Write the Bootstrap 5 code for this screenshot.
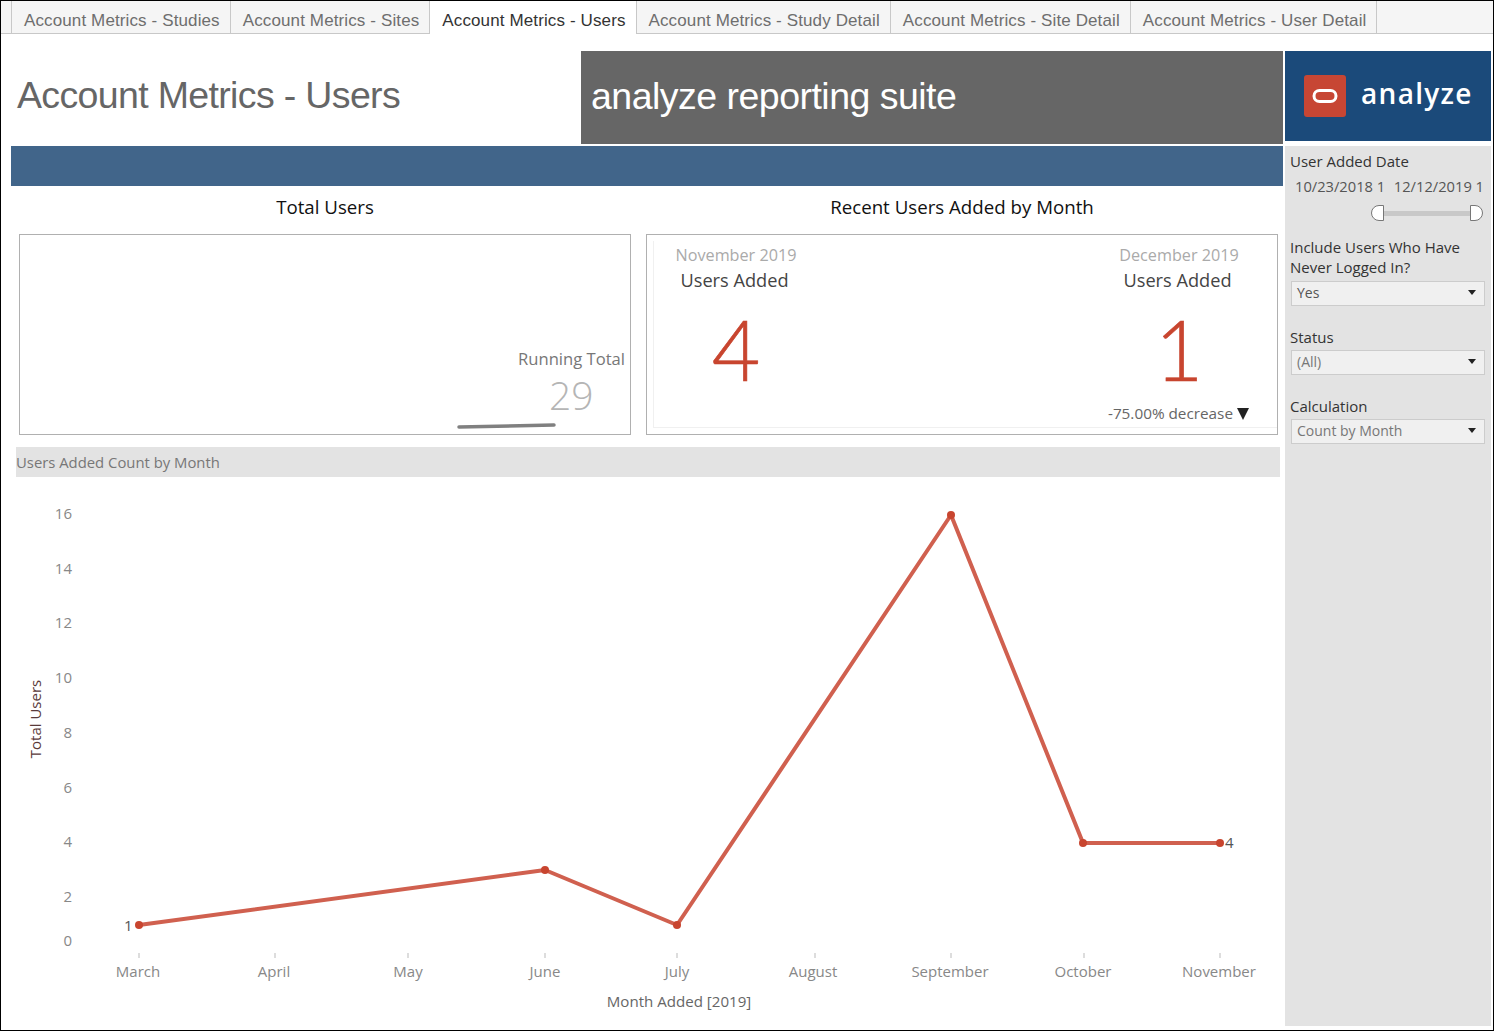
<!DOCTYPE html>
<html lang="en"><head><meta charset="utf-8"><title>Account Metrics - Users</title>
<link href="https://cdn.jsdelivr.net/npm/bootstrap@5.3.0/dist/css/bootstrap.min.css" rel="stylesheet">
<style>
html,body{margin:0;background:#fff}
body{font-family:"Open Sans","Noto Sans",sans-serif;color:#333}
.frame{width:1494px;height:1031px;border:1px solid #000;overflow:hidden;background:#fff}
.tabstrip{height:33px;background:#f5f5f5;border-bottom:1px solid #c8c8c8;padding-left:10px;flex-wrap:nowrap;margin-bottom:0;--bs-nav-tabs-border-width:0}
.tabstrip .nav-link{height:32px;padding:9px 10px 0 12px;border:0;border-right:1px solid #c8c8c8;border-radius:0;color:#6e6e6e;font:17px/21px "Liberation Sans",sans-serif;letter-spacing:.12px;background:transparent;margin:0;white-space:nowrap}
.tabstrip .nav-link.active{height:33px;background:#fff;color:#333;border-right:1px solid #c8c8c8}
.tabstrip .first-tab{border-left:1px solid #c8c8c8}
.mainarea{padding-top:17px;height:996px}
.leftcol{width:1282px;flex:none}
.headrow{height:93px}
.ptitle{width:580px;font:37.5px/1 "Liberation Sans",sans-serif;letter-spacing:-.65px;color:#666;padding:26px 0 0 16px;flex:none}
.suite{flex:1;background:#666;color:#fff;font:37.5px/1 "Liberation Sans",sans-serif;letter-spacing:-.52px;padding:27px 0 0 10px}
.band{height:40px;background:#41658a;margin:2px 0 0 10px}
.stitle{font-size:18.7px;line-height:24px;color:#111;text-align:center}
.titles{padding:9px 0 0 18px;height:48px}
.t1{width:612px}.t2{width:632px;margin-left:15px;flex:none}
.cardrow{padding-left:18px}
.kpibox{border:1px solid #b0b0b0;height:201px;background:#fff;border-radius:0;flex:none}
.kpi1{width:612px}
.kpi2{width:632px;margin-left:15px;padding:6px 0 6px 6px}
.kinner{height:100%;border-left:1px solid #f0f0f0;border-bottom:1px solid #f0f0f0;position:relative}
.rt{text-align:right;padding-right:5px;margin-top:113px;color:#777;font-size:16.6px;line-height:22px}
.rtnum{font-size:39px;line-height:46px;color:#b5b5b5;font-weight:300;padding-left:529px;margin-top:2px;width:600px}
.spark{display:block;margin:4px 0 0 437px}
.kcol{text-align:center}
.kleft{margin-left:20px;width:124px}
.kright{margin-right:36px;width:124px}
.kdate{color:#aaa;font-size:16.2px;line-height:20px;margin-top:4px}
.kname{color:#444;font-size:18.2px;line-height:24px;margin:3px 0 0 -3px}
.knum{color:#c8452f;font-family:Lato,"Open Sans",sans-serif;font-size:84px;line-height:90px;font-weight:300;margin-top:12px;-webkit-text-stroke:.6px #c8452f}
.kdelta{position:absolute;right:28px;bottom:4px;font-size:15.3px;line-height:20px;color:#666;white-space:nowrap}
.kdelta .tri{display:inline-block;width:0;height:0;border-left:6px solid transparent;border-right:6px solid transparent;border-top:12px solid #222;margin-left:4px;vertical-align:-1px}
.strip{margin:12px 3px 0 15px;height:30px;background:#e3e3e3;color:#777;font-size:14.85px;line-height:30px}
.chartsvg{display:block;margin-top:0}
.chartsvg text{font-family:"Open Sans","Noto Sans",sans-serif}
.side{width:206px;flex:none;margin-left:2px}
.logo{height:90px;background:#1b4a7a;padding-left:19px;gap:15px}
.lmark{width:42px;height:42px;background:#c74634;border-radius:3px}
.lname{color:#fff;font-size:28px;font-weight:600;letter-spacing:1.3px;line-height:1;padding-bottom:6px}
.sfilters{margin-top:5px;height:880px;background:#e3e3e3;padding:5px 6px 0 5px}
.flabel{font-size:15px;line-height:20px;color:#333}
.dates{font-size:14.7px;line-height:20px;color:#555;padding:5px 1px 0 5px;white-space:nowrap}
.slidewrap{height:18px;margin:9px 2px 0 81px;position:relative}
.slidewrap::before{content:"";display:block;height:5px;background:#c8c8c8;position:absolute;left:7px;right:7px;top:6px}
.hdl{position:absolute;top:0;width:13px;height:16px;background:#fff;border:1px solid #777}
.hl{left:0;border-radius:8px 0 0 8px}
.hr{right:0;border-radius:0 8px 8px 0}
.pick{height:25px;margin-left:1px;background:#f0f0f0;border:1px solid #ccc;font-size:14px;line-height:21px;color:#555;padding:0 8px 2px 5px}
.pick::after{content:"";width:0;height:0;border-left:4.5px solid transparent;border-right:4.5px solid transparent;border-top:5px solid #222;margin-top:-1px}
.soft{color:#777}
.gapa{margin-top:14px}.gapb{margin-top:21px}.gapc{margin-top:3px}
</style></head>
<body>
<div class="frame d-flex flex-column">
 <ul class="nav nav-tabs tabstrip">
  <li class="nav-item"><a class="nav-link first-tab" href="#">Account Metrics - Studies</a></li>
  <li class="nav-item"><a class="nav-link" href="#">Account Metrics - Sites</a></li>
  <li class="nav-item"><a class="nav-link active" href="#">Account Metrics - Users</a></li>
  <li class="nav-item"><a class="nav-link" href="#">Account Metrics - Study Detail</a></li>
  <li class="nav-item"><a class="nav-link" href="#">Account Metrics - Site Detail</a></li>
  <li class="nav-item"><a class="nav-link" href="#">Account Metrics - User Detail</a></li>
 </ul>
 <div class="d-flex mainarea">
  <div class="leftcol">
   <div class="d-flex headrow">
    <h1 class="ptitle m-0">Account Metrics - Users</h1>
    <div class="suite">analyze reporting suite</div>
   </div>
   <div class="band"></div>
   <div class="d-flex titles">
    <div class="stitle t1">Total Users</div>
    <div class="stitle t2">Recent Users Added by Month</div>
   </div>
   <div class="d-flex cardrow">
    <div class="kpibox kpi1">
     <div class="rt">Running Total</div>
     <div class="rtnum">29</div>
     <svg class="spark" width="100" height="8" viewBox="0 0 100 8"><path d="M2 5 L97 3" stroke="#808080" stroke-width="3.5" stroke-linecap="round" fill="none"/></svg>
    </div>
    <div class="kpibox kpi2">
     <div class="kinner d-flex justify-content-between">
      <div class="kcol kleft">
       <div class="kdate">November 2019</div><div class="kname">Users Added</div><div class="knum">4</div>
      </div>
      <div class="kcol kright">
       <div class="kdate">December 2019</div><div class="kname">Users Added</div><div class="knum">1</div>
      </div>
      <div class="kdelta">-75.00% decrease<span class="tri"></span></div>
     </div>
    </div>
   </div>
   <div class="strip">Users Added Count by Month</div>
   <svg class="chartsvg" width="1282" height="549" viewBox="1 477 1282 549" xmlns="http://www.w3.org/2000/svg">
    <g font-size="15" fill="#888" text-anchor="end">
     <text x="72" y="519">16</text><text x="72" y="574">14</text><text x="72" y="628">12</text><text x="72" y="683">10</text><text x="72" y="738">8</text><text x="72" y="793">6</text><text x="72" y="847">4</text><text x="72" y="902">2</text><text x="72" y="946">0</text>
    </g>
    <text transform="translate(41,719) rotate(-90)" font-size="15" fill="#5a3a3a" text-anchor="middle">Total Users</text>
    <g stroke="#bbb" stroke-width="1">
     <path d="M139 953v5M275 953v5M408 953v5M545 953v5M677 953v5M815 953v5M951 953v5M1084 953v5M1220 953v5"/>
    </g>
    <g font-size="15" fill="#888" text-anchor="middle">
     <text x="138" y="977">March</text><text x="274" y="977">April</text><text x="408" y="977">May</text><text x="545" y="977">June</text><text x="677" y="977">July</text><text x="813" y="977">August</text><text x="950" y="977">September</text><text x="1083" y="977">October</text><text x="1219" y="977">November</text>
    </g>
    <text x="679" y="1007" font-size="15.1" fill="#666" text-anchor="middle">Month Added [2019]</text>
    <polyline points="139,925 545,870 677,925 951,515 1083,843 1220,843" fill="none" stroke="#d0604f" stroke-width="4" stroke-linejoin="round"/>
    <g fill="#c8452f"><circle cx="139" cy="925" r="4"/><circle cx="545" cy="870" r="4"/><circle cx="677" cy="925" r="4"/><circle cx="951" cy="515" r="4"/><circle cx="1083" cy="843" r="4"/><circle cx="1220" cy="843" r="4"/></g>
    <g font-size="15" fill="#555"><text x="124" y="931">1</text><text x="1225" y="848">4</text></g>
   </svg>
  </div>
  <aside class="side">
   <div class="logo d-flex align-items-center">
    <div class="lmark d-flex align-items-center justify-content-center">
     <svg width="26" height="16" viewBox="0 0 26 16"><rect x="2" y="2.5" width="22" height="11" rx="5.5" fill="none" stroke="#fff" stroke-width="3"/></svg>
    </div>
    <div class="lname">analyze</div>
   </div>
   <div class="sfilters">
    <div class="flabel">User Added Date</div>
    <div class="dates d-flex justify-content-between"><span>10/23/2018 1</span><span>12/12/2019 1</span></div>
    <div class="slidewrap"><span class="hdl hl"></span><span class="hdl hr"></span></div>
    <div class="flabel gapa">Include Users Who Have<br>Never Logged In?</div>
    <div class="pick d-flex justify-content-between align-items-center mt-1">Yes</div>
    <div class="flabel gapb">Status</div>
    <div class="pick d-flex justify-content-between align-items-center soft gapc">(All)</div>
    <div class="flabel gapb">Calculation</div>
    <div class="pick d-flex justify-content-between align-items-center soft gapc">Count by Month</div>
   </div>
  </aside>
 </div>
</div>
<script src="https://cdn.jsdelivr.net/npm/bootstrap@5.3.0/dist/js/bootstrap.bundle.min.js"></script>
</body></html>
